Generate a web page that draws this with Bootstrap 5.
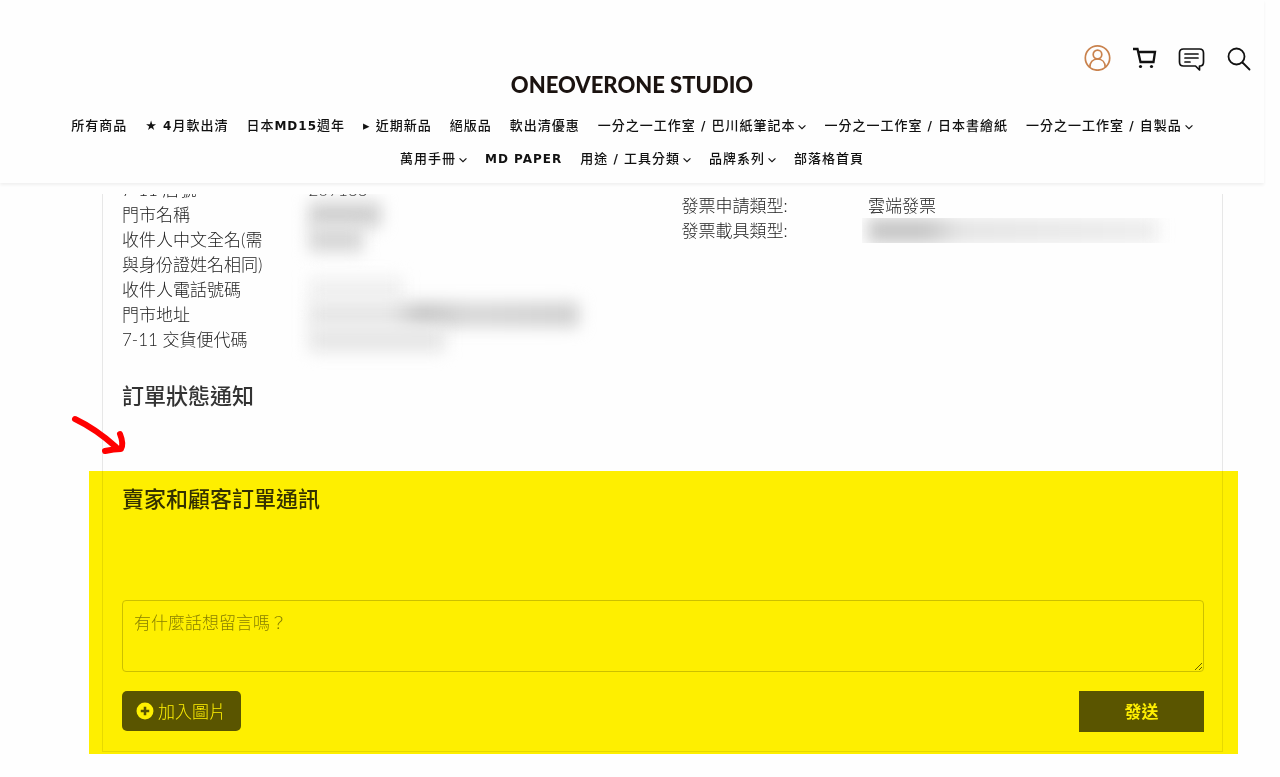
<!DOCTYPE html>
<html lang="zh-Hant">
<head>
<meta charset="utf-8">
<meta name="viewport" content="width=device-width, initial-scale=1">
<title>ONEOVERONE STUDIO</title>
<link href="https://cdn.jsdelivr.net/npm/bootstrap@5.3.0/dist/css/bootstrap.min.css" rel="stylesheet">
<style>
  body { background: #fefefe; color: #222; font: 300 17px/25px Lato, "Noto Sans CJK TC", sans-serif; }
  a { color: inherit; text-decoration: none; }
  .site-header { padding: 44px 0 8px; margin-right: 16px; box-shadow: 0 2px 3px rgba(0,0,0,.06); }
  .tools { padding-right: 12px; gap: 20px; }
  .tools a, .tools svg { display: block; width: 27px; height: 27px; }
  .brand { display: block; font: 900 22px/28px Lato, sans-serif; color: #1b1310; }
  .menu { padding: 10px 56px 0; column-gap: 18px; font: 500 13px/33px "DejaVu Sans", "Noto Sans CJK TC", sans-serif; letter-spacing: 1px; color: #111; }
  .menu a { height: 33px; }
  .menu b { font-weight: 700; font-size: 12px; }
  .menu svg { width: 8px; height: 8px; margin-left: 3px; }
  .page-view { margin: 11px 57px 0 102px; }
  .clip-top { overflow: hidden; border: solid #e7e7e7; border-width: 0 1px; }
  .details { margin-top: -17px; padding-bottom: 30px; }
  .details .cell { padding: 0 19px; }
  h2 { font: 500 22px/28px Lato, "Noto Sans CJK TC", sans-serif; color: #333; margin: 0; }
  .notice { padding: 0 19px 61px; }
  .messages { border: solid #e7e7e7; border-width: 0 1px 1px; padding: 14px 18px 19px 19px; }
  .messages::after { content: ""; position: absolute; inset: 0 -16px -3px -14px; background: #fff000; mix-blend-mode: multiply; pointer-events: none; }
  .message-box { height: 72px; margin: 87px 0 19px; padding: 9px 11px; border: 1px solid #ccc; border-radius: 4px; font-size: 17px; line-height: 25px; font-weight: 300; background: transparent; }
  .message-box::placeholder { color: #888; opacity: 1; }
  .btn-photo, .btn-send { background: #5a5a5a; color: #fff; border: 0; height: 40px; line-height: 25px; font-size: 17px; }
  .btn-photo { border-radius: 5px; padding: 0 15px 0 14px; gap: 4px; font-weight: 300; }
  .btn-send { border-radius: 0; width: 125px; height: 41px; font-weight: 700; }
  .btn-photo:hover, .btn-send:hover { background: #444; color: #fff; }
  .pointer { position: absolute; left: -33px; top: -58px; width: 58px; height: 44px; z-index: 1; }
  .veil { height: 25px; filter: blur(8px); }
  .veil-name { width: 72px; background: #d0d0d0; }
  .veil-person { width: 54px; background: #d6d6d6; margin-bottom: 25px; }
  .veil-phone { width: 94px; background: #f0f0f0; }
  .veil-address { width: 270px; background: linear-gradient(90deg, #e6e6e6 30%, #c6c6c6 42%, #d8d8d8 60%, #d0d0d0); }
  .veil-code { width: 136px; background: #e6e6e6; }
  .veil-clip { overflow: hidden; margin-left: -6px; padding-left: 6px; }
  .veil-carrier { width: 290px; background: linear-gradient(90deg, #c6c6c6 20%, #e4e4e4 32%, #ededed); }
</style>
</head>
<body class="min-vh-100">
<header class="site-header">
  <div class="tools d-flex justify-content-end">
    <a href="#" aria-label="會員"><svg viewBox="0 0 27 27" fill="none" stroke="#c9824d" stroke-width="1.7"><circle cx="13.500" cy="14" r="12.200"/><circle cx="13.500" cy="10.500" r="4.300"/><path d="M5.800 23.300c0-5 3-8.300 7.700-8.300s7.700 3.300 7.700 8.300"/></svg></a>
    <a href="#" aria-label="購物車"><svg viewBox="0 0 27 27" fill="none" stroke="#111" stroke-width="2.300"><path d="M2 5h4.500l3 13H22.500L24 8H7"/><circle cx="9.500" cy="22.500" r="1.600" fill="#111" stroke="none"/><circle cx="20.500" cy="22.500" r="1.600" fill="#111" stroke="none"/></svg></a>
    <a href="#" aria-label="訊息"><svg viewBox="0 0 27 27" fill="none" stroke="#111" stroke-width="1.7" stroke-linecap="round" stroke-linejoin="round"><path d="M5.500 5h16q4 0 4 4v9q0 4-3.500 4h-.500v4L17.500 22h-12q-4 0-4-4V9q0-4 4-4zM7 10h13M7 14h13M7 18h5"/></svg></a>
    <a href="#" aria-label="搜尋"><svg viewBox="0 0 27 27" fill="none" stroke="#111" stroke-width="1.8" stroke-linecap="round"><circle cx="11.500" cy="12.500" r="8"/><path d="m17.500 18.500 7 7"/></svg></a>
  </div>
  <div class="text-center"><a class="brand" href="#">ONEOVERONE STUDIO</a></div>
  <nav class="menu d-flex flex-wrap justify-content-center">
    <a href="#">所有商品</a>
    <a href="#">★ <b>4</b>月軟出清</a>
    <a href="#">日本<b>MD15</b>週年</a>
    <a href="#">▸ 近期新品</a>
    <a href="#">絕版品</a>
    <a href="#">軟出清優惠</a>
    <a href="#">一分之一工作室 <b>/</b> 巴川紙筆記本<svg viewBox="0 0 7 7" fill="none" stroke="#111"><path d="m.5 2 3 3 3-3"/></svg></a>
    <a href="#">一分之一工作室 <b>/</b> 日本書繪紙</a>
    <a href="#">一分之一工作室 <b>/</b> 自製品<svg viewBox="0 0 7 7" fill="none" stroke="#111"><path d="m.5 2 3 3 3-3"/></svg></a>
    <a href="#">萬用手冊<svg viewBox="0 0 7 7" fill="none" stroke="#111"><path d="m.5 2 3 3 3-3"/></svg></a>
    <a href="#"><b>MD PAPER</b></a>
    <a href="#">用途 <b>/</b> 工具分類<svg viewBox="0 0 7 7" fill="none" stroke="#111"><path d="m.5 2 3 3 3-3"/></svg></a>
    <a href="#">品牌系列<svg viewBox="0 0 7 7" fill="none" stroke="#111"><path d="m.5 2 3 3 3-3"/></svg></a>
    <a href="#">部落格首頁</a>
  </nav>
</header>
<main class="page-view">
  <div class="clip-top">
    <div class="details row g-0">
      <div class="col-6">
        <div class="row g-0">
          <div class="col-4 cell">
            <div>7-11 店號</div><div>門市名稱</div><div>收件人中文全名(需與身份證姓名相同)</div><div>收件人電話號碼</div><div>門市地址</div><div>7-11 交貨便代碼</div>
          </div>
          <div class="col-8 cell">
            <div>209133</div>
            <div class="veil veil-name"></div>
            <div class="veil veil-person"></div>
            <div class="veil veil-phone"></div>
            <div class="veil veil-address"></div>
            <div class="veil veil-code"></div>
          </div>
        </div>
      </div>
      <div class="col-6 pt-3">
        <div class="row g-0">
          <div class="col-4 cell"><div>發票申請類型:</div><div>發票載具類型:</div></div>
          <div class="col-8 cell"><div>雲端發票</div><div class="veil-clip"><div class="veil veil-carrier"></div></div></div>
        </div>
      </div>
    </div>
    <section class="notice"><h2>訂單狀態通知</h2></section>
  </div>
  <section class="messages position-relative">
    <svg class="pointer" viewBox="0 0 58 44" fill="none" stroke="#f00" stroke-width="6" stroke-linecap="round" stroke-linejoin="round"><path d="M5 6Q26 16 46 34M50 21Q54 31 51 36Q44 36 35 38"/></svg>
    <h2>賣家和顧客訂單通訊</h2>
    <form>
      <textarea class="message-box form-control" aria-label="留言" placeholder="有什麼話想留言嗎？"></textarea>
      <div class="d-flex justify-content-between align-items-start">
        <button type="button" class="btn btn-photo d-flex align-items-center"><svg width="18" height="18" viewBox="0 0 17 17"><circle cx="8.500" cy="8.500" r="8" fill="#fff"/><path d="M8.500 4.500v8M4.500 8.500h8" stroke="#5a5a5a" stroke-width="2.400"/></svg>加入圖片</button>
        <button type="submit" class="btn btn-send">發送</button>
      </div>
    </form>
  </section>
</main>
<script src="https://cdn.jsdelivr.net/npm/bootstrap@5.3.0/dist/js/bootstrap.bundle.min.js"></script>
</body>
</html>
